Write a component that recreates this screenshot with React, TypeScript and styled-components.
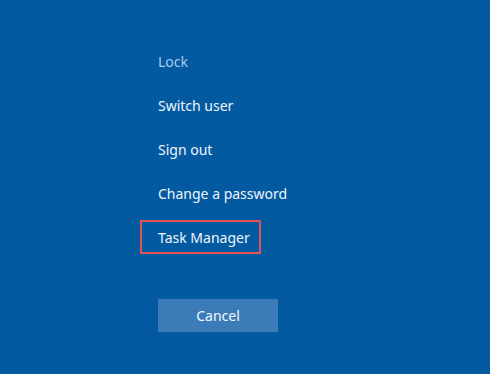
import styled, { createGlobalStyle } from "styled-components";

const BG = "#035aa0";

const Global = createGlobalStyle`
  html, body {
    margin: 0;
    padding: 0;
    background: ${BG};
  }
`;

const Screen = styled.div`
  width: 490px;
  height: 374px;
  background: ${BG};
  font-family: "Noto Sans", "Open Sans", sans-serif;
  display: flex;
  flex-direction: column;
  padding: 39px 0 0 140px;
  box-sizing: border-box;
`;

const Option = styled.div<{ dim?: boolean; focused?: boolean }>`
  height: 44px;
  box-sizing: border-box;
  display: flex;
  align-items: center;
  align-self: flex-start;
  padding: 0 16px 0 18px;
  font-size: 14px;
  color: ${(p) => (p.dim ? "#a8cbed" : "#eef5fc")};
  ${(p) =>
    p.focused &&
    `
    height: 34px;
    margin-top: 5px;
    border: 2px solid #e05656;
    padding: 0 9px 0 16px;
  `}
`;

const CancelButton = styled.button`
  margin: 45px 0 0 18px;
  align-self: flex-start;
  width: 120px;
  height: 33px;
  border: none;
  background: #3b7cb8;
  color: #f2f7fc;
  font-family: inherit;
  font-size: 14px;
`;

export default function App() {
  return (
    <Screen>
      <Global />
      <Option dim>Lock</Option>
      <Option>Switch user</Option>
      <Option>Sign out</Option>
      <Option>Change a password</Option>
      <Option focused>Task Manager</Option>
      <CancelButton>Cancel</CancelButton>
    </Screen>
  );
}
